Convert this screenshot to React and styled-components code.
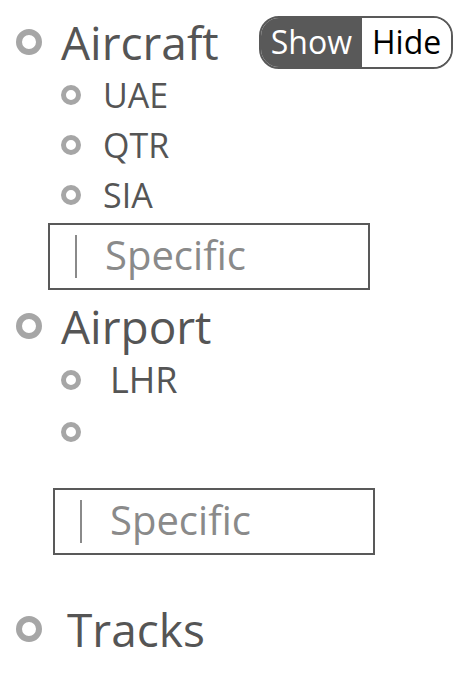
import React from "react";
import styled, {createGlobalStyle} from "styled-components";

const GlobalStyle = createGlobalStyle`
body {
  margin: 0;
  background: #fff;
  font-family: "Open Sans", "Liberation Sans", sans-serif;
}
`;

const Panel = styled.div`
display: flex;
flex-direction: column;
padding: 14px 0 0 16px;
`;

const HeaderRow = styled.div`
display: flex;
align-items: center;
height: 56px;
margin-top: ${p => p.top || 0}px;
`;

const Ring = styled.span`
box-sizing: border-box;
flex: none;
width: ${p => p.size}px;
height: ${p => p.size}px;
border-radius: 50%;
border: ${p => p.thick}px solid #a6a6a6;
`;

const Title = styled.span`
font-size: 46px;
line-height: 1;
color: #555;
margin-left: ${p => p.gap || 19}px;
`;

const SubList = styled.div`
display: flex;
flex-direction: column;
padding-left: 45px;
`;

const SubRow = styled.div`
display: flex;
align-items: center;
height: ${p => p.h || 50}px;
`;

const SubLabel = styled.span`
font-size: ${p => p.size || 34}px;
line-height: 1;
color: #555;
margin-left: ${p => p.gap || 22}px;
`;

const SearchBox = styled.label`
box-sizing: border-box;
display: flex;
align-items: center;
width: 322px;
height: 67px;
margin: ${p => p.top}px 0 0 ${p => p.left}px;
border: 2.5px solid #595959;
padding-left: 25px;
`;

const Caret = styled.span`
width: 2px;
height: 43px;
background: #8a8a8a;
`;

const Placeholder = styled.span`
font-size: 40px;
line-height: 1;
color: #8a8a8a;
margin-left: 28px;
margin-top: -4px;
`;

const Toggle = styled.div`
display: flex;
margin-left: 40px;
height: 53px;
box-sizing: border-box;
border: 2px solid #595959;
border-radius: 20px;
overflow: hidden;
`;

const ToggleOption = styled.span`
display: flex;
align-items: center;
padding: 0 10px 2px;
font-size: 32px;
background: ${p => (p.active ? "#595959" : "#fff")};
color: ${p => (p.active ? "#fff" : "#000")};
`;

const Specific = ({top, left}) => (
    <SearchBox top={top} left={left}>
        <Caret/>
        <Placeholder>Specific</Placeholder>
    </SearchBox>
);

export default function App() {
    return (
        <Panel>
            <GlobalStyle/>
            <HeaderRow>
                <Ring size={26} thick={6}/>
                <Title>Aircraft</Title>
                <Toggle>
                    <ToggleOption active>Show</ToggleOption>
                    <ToggleOption>Hide</ToggleOption>
                </Toggle>
            </HeaderRow>
            <SubList>
                {["UAE", "QTR", "SIA"].map(code => (
                    <SubRow key={code}>
                        <Ring size={20} thick={5}/>
                        <SubLabel>{code}</SubLabel>
                    </SubRow>
                ))}
            </SubList>
            <Specific top={3} left={32}/>
            <HeaderRow top={8}>
                <Ring size={26} thick={6}/>
                <Title>Airport</Title>
            </HeaderRow>
            <SubList>
                <SubRow h={52}>
                    <Ring size={20} thick={5}/>
                    <SubLabel size={36} gap={29}>LHR</SubLabel>
                </SubRow>
                <SubRow h={52}>
                    <Ring size={20} thick={5}/>
                </SubRow>
            </SubList>
            <Specific top={30} left={37}/>
            <HeaderRow top={46}>
                <Ring size={26} thick={6}/>
                <Title gap={25}>Tracks</Title>
            </HeaderRow>
        </Panel>
    );
}
